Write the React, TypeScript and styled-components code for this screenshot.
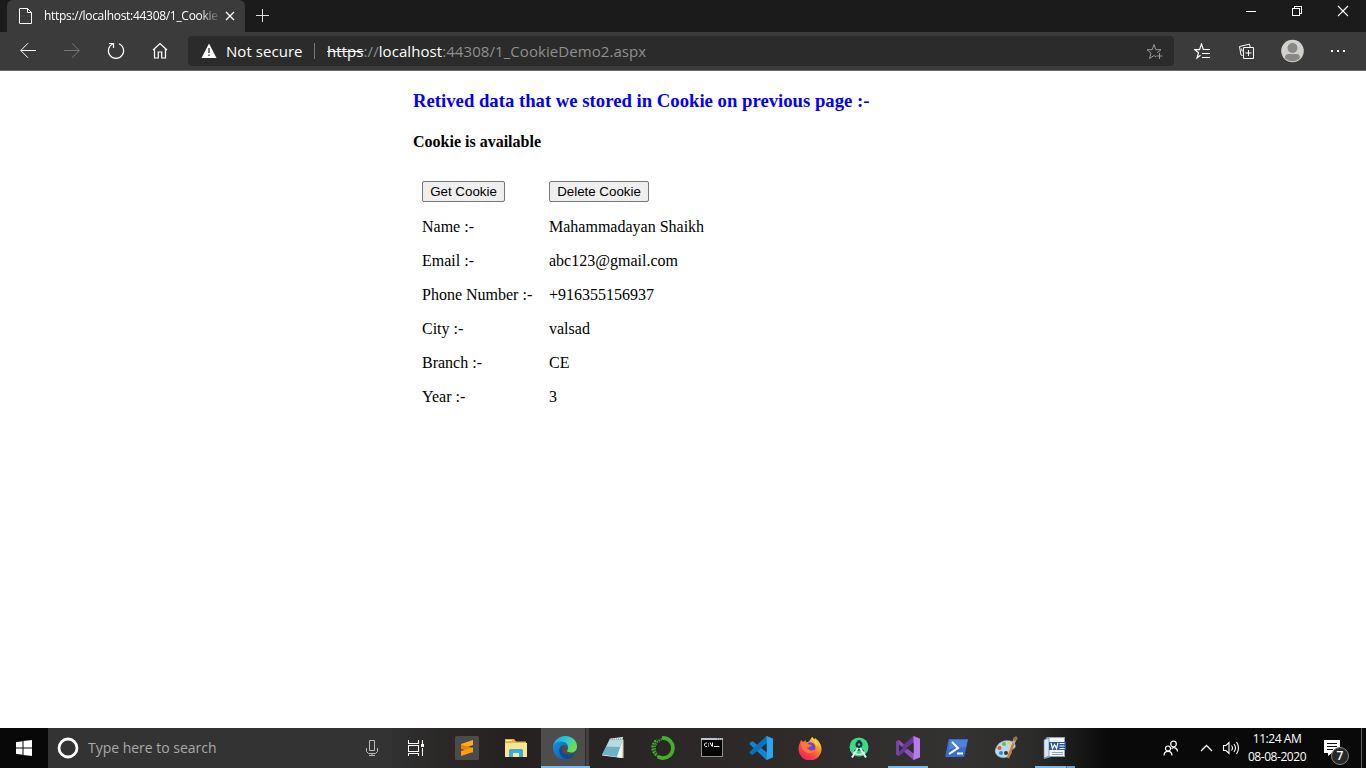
import React from "react";
import styled, { createGlobalStyle } from "styled-components";

const GlobalStyle = createGlobalStyle`
  *, *::before, *::after { box-sizing: border-box; }
  body { margin: 0; background: #fff; overflow: hidden; }
  svg { display: block; flex: none; }
`;

const ui = `"Open Sans", "Noto Sans", sans-serif`;

const Screen = styled.div`
  display: flex;
  flex-direction: column;
  width: 1366px;
  height: 768px;
`;

const TitleBar = styled.header`
  display: flex;
  height: 32px;
  background: #1b1b1b;
  padding-left: 7px;
`;

const Tab = styled.div`
  display: flex;
  align-items: center;
  width: 238px;
  background: #3b3b3b;
  border-radius: 6px 6px 0 0;
  padding-left: 11px;
`;

const TabTitle = styled.span`
  width: 175px;
  margin-left: 11px;
  white-space: nowrap;
  font: 12px/20px ${ui};
  letter-spacing: -0.3px;
  color: #fff;
  mask-image: linear-gradient(90deg, #000 156px, transparent 177px);
`;

const TabClose = styled.span`
  margin-left: 6px;
`;

const NewTab = styled.div`
  margin: 9px 0 0 11px;
`;

const WindowControls = styled.div`
  display: flex;
  margin-left: auto;
`;

const WindowButton = styled.div`
  display: flex;
  justify-content: center;
  width: 46px;
  padding-top: 5px;
`;

const Toolbar = styled.nav`
  display: flex;
  align-items: center;
  height: 39px;
  background: #3b3b3b;
  border-bottom: 1px solid #696969;
`;

const NavButton = styled.div`
  display: flex;
  align-items: center;
  justify-content: center;
  width: 44px;
  height: 30px;
`;

const NavGroup = styled.div`
  display: flex;
  width: 188px;
  padding-left: 6px;
`;

const AddressBar = styled.div`
  display: flex;
  align-items: center;
  width: 986px;
  height: 30px;
  padding: 0 11px 0 13px;
  border-radius: 4px;
  background: #2b2b2b;
  font: 15px/20px ${ui};
  white-space: nowrap;
`;

const SecurityLabel = styled.span`
  width: 79px;
  margin-left: 9px;
  color: #fff;
  letter-spacing: 0.05px;
`;

const Divider = styled.span`
  width: 1px;
  height: 16px;
  margin: 0 12px 0 9px;
  background: #777;
`;

const Url = styled.span`
  flex: 1;
  color: #8f8f8f;
  letter-spacing: 0.07px;
`;

const Scheme = styled.s`
  color: #fff;
`;

const Host = styled.span`
  color: #fff;
`;

const ToolGroup = styled.div`
  display: flex;
  padding-left: 6px;
`;

const ToolButton = styled(NavButton)`
  width: 45px;
`;

const Page = styled.main`
  flex: 1;
  padding: 19px 0 0 413px;
  font: 16px/18px "Liberation Serif", serif;
  color: #000;
`;

const Heading = styled.h3`
  margin: 0;
  font-size: 18.72px;
  line-height: 22px;
  color: #0000ff;
`;

const Status = styled.h4`
  margin: 21px 0 22px;
  font-size: 16px;
  line-height: 18px;
`;

const DataGrid = styled.div`
  display: grid;
  grid-template-columns: 127px 200px;
  grid-template-rows: 37px repeat(6, 34px);
  padding-left: 1px;
`;

const Cell = styled.div`
  padding: 8px;
  white-space: nowrap;
`;

const ActionButton = styled.button<{ $width: number }>`
  display: block;
  width: ${(p) => p.$width}px;
  height: 21px;
  padding: 0;
  border: 1px solid #767676;
  border-radius: 2px;
  background: #efefef;
  color: #000;
  font: 13.333px/15px "Liberation Sans", sans-serif;
`;

const Taskbar = styled.footer`
  display: flex;
  height: 40px;
  background: linear-gradient(90deg, #080808 0, #080808 48px, #303030 392px, #2b2928 440px, #252120 510px, #2b2626 640px, #2e2b29 800px, #343332 960px, #2b2b2a 1035px, #090909 1110px, #090909 100%);
  font-family: ${ui};
`;

const StartButton = styled.div`
  display: flex;
  align-items: center;
  justify-content: center;
  width: 48px;
`;

const SearchBox = styled.div`
  display: flex;
  align-items: center;
  width: 344px;
  padding: 0 14px 0 9px;
  background: #333;
`;

const SearchText = styled.span`
  flex: 1;
  margin-left: 9px;
  font-size: 14px;
  line-height: 20px;
  letter-spacing: -0.02px;
  color: #a9a9a9;
`;

const TaskViewButton = styled.div`
  display: flex;
  align-items: center;
  width: 49px;
  padding-left: 15px;
`;

const TaskSlot = styled.div<{ $state?: "active" | "open" | "multi" }>`
  display: flex;
  position: relative;
  align-items: center;
  width: 49px;
  padding-left: 12px;
  ${(p) =>
    p.$state === "active" &&
    `background: linear-gradient(90deg, #4f4c4c 44px, #302c2c 44px, #302c2c 45px, #443f3f 45px, #443f3f 48px, transparent 48px);
     box-shadow: inset 0 -2px #76b9ed;`}
  &::after {
    content: "";
    display: ${(p) => (p.$state === "open" || p.$state === "multi" ? "block" : "none")};
    position: absolute;
    bottom: 0;
    left: 4px;
    width: 40px;
    height: 2px;
    background: ${(p) => (p.$state === "multi" ? "linear-gradient(90deg, #76b9ed 31px, #4e7da1 31px, #4e7da1 32px, #68a3d1 32px)" : "#76b9ed")};
  }
`;

const AppRow = styled.div`
  display: flex;
  padding-left: 2px;
`;

const Tray = styled.div`
  display: flex;
  align-items: center;
  flex: 1;
  padding-left: 83px;
`;

const TrayIcon = styled.span<{ $gap: number }>`
  margin-left: ${(p) => p.$gap}px;
`;

const Clock = styled.div`
  width: 62px;
  margin-left: 6px;
  text-align: center;
  white-space: nowrap;
  font-size: 12px;
  line-height: 18px;
  letter-spacing: -0.45px;
  color: #fff;
`;

const Notifications = styled.div`
  position: relative;
  width: 26px;
  height: 26px;
  margin: 10px 0 0 16px;
`;

const Badge = styled.span`
  position: absolute;
  left: 7px;
  top: 6.500px;
  width: 18px;
  height: 18px;
  border: 1px solid #858585;
  border-radius: 50%;
  background: #282828;
  color: #fff;
  font-size: 12px;
  font-weight: 600;
  line-height: 16px;
  text-align: center;
`;

const DesktopEdge = styled.span`
  width: 1px;
  height: 40px;
  margin-left: auto;
  margin-right: 4px;
  background: #656565;
`;

type LineProps = { w: number; h: number; color?: string; width?: number; crisp?: boolean; children: React.ReactNode };

const Line = ({ w, h, color = "#fff", width = 1, crisp, children }: LineProps) => (
  <svg width={w} height={h} viewBox={`0 0 ${w} ${h}`} fill="none" stroke={color} strokeWidth={width} shapeRendering={crisp ? "crispEdges" : undefined}>
    {children}
  </svg>
);

const Art = ({ children }: { children: React.ReactNode }) => (
  <svg width="24" height="24" viewBox="0 0 24 24">{children}</svg>
);

const SublimeIcon = () => (
  <Art>
    <rect width="24" height="24" rx="1.5" fill="#4b4b4b" />
    <path d="M6 8 18 4v5L6 13z" fill="#ffae1a" />
    <path d="M6 8.500V13l12 3.500V12z" fill="#e78200" />
    <path d="M18 11.500v4.500L6 20v-5z" fill="#ff9d0a" />
  </Art>
);

const ExplorerIcon = () => (
  <Art>
    <path d="M1 3h9l2 2.500h10V21H1z" fill="#e8b63d" />
    <path d="M2 4h6v1H2z" fill="#fff2b5" />
    <path d="M1 7h22v14H1z" fill="#ffe590" />
    <path d="M5 21v-6.500q0-1.500 1.500-1.500h11q1.500 0 1.500 1.500V21h-4v-4H9v4z" fill="#35ade0" />
  </Art>
);

const EdgeIcon = () => (
  <Art>
    <defs>
      <linearGradient id="edgeTop" x1="0" y1="0" x2="1" y2=".5">
        <stop stopColor="#2098dc" /><stop offset=".5" stopColor="#28c7dc" /><stop offset="1" stopColor="#6dde51" />
      </linearGradient>
      <linearGradient id="edgeBase" x1="0" y1="0" x2="1" y2="1">
        <stop stopColor="#1592de" /><stop offset="1" stopColor="#1057a3" />
      </linearGradient>
    </defs>
    <path d="M0 12C0 5 5.500 0 12 0c8 0 12 5.500 12 10.500 0 4-3 6-6 6-2.500 0-4-.8-4-1.500 0-.6 1-1 1-3 0-2.300-2-4.500-5.500-4.500C4 7.500 0 10 0 12z" fill="url(#edgeTop)" />
    <path d="M0 12c0-4 4-6.500 8.500-6.500 4.500 0 7 3 6.500 6.500-.3-1.500-2-3-4-3-2.500 0-4.500 2.500-4.500 5.500 0 5 4 8.500 8.500 8.500-1 .6-2 1-3.500 1C5.500 24 0 18.500 0 12z" fill="url(#edgeBase)" />
    <path d="M9 9.500c-2 1.200-2.700 3-2.700 5 0 5 4 8.800 9 8.500 3-.8 5.300-2.800 6.700-5 .3-.6-.2-.8-.7-.5C15 20.500 8.500 18 8.500 12.500 8.500 11.300 8.700 10.500 9 9.500z" fill="#124b91" />
  </Art>
);

const NotepadIcon = () => (
  <Art>
    <path d="M20.500 3l1.500 1v18h-1.500z" fill="#9b7948" />
    <path d="M8 2.500 21 1l-.5 21L0 19.500z" fill="#d9eef1" />
    <path d="M8 3.500h12.500L15 21 0 18.500z" fill="#6db2c2" />
    <path d="M8 3.500h12.500L18 11 4.500 10.500z" fill="#b5dce4" />
    <path d="M0 19l15 2 5.500-15v16z" fill="#f2f5f5" />
    <path d="M8 3h13" stroke="#777" strokeDasharray="1 1" />
  </Art>
);

const AnacondaIcon = () => (
  <Art>
    <path d="M11 2a10 10 0 1 1-4 18.700" fill="none" stroke="#43b02a" strokeWidth="3.700" />
    <path d="M8 21C0 17-.5 8 6 3.800" fill="none" stroke="#43b02a" strokeWidth="2.400" strokeDasharray="2 1" />
    <path d="M6 18C2 14 3 6 11 3" fill="none" stroke="#369d25" strokeWidth="2.200" strokeDasharray="1.600 .9" />
  </Art>
);

const CommandIcon = () => (
  <Art>
    <rect x="1.500" y="2.500" width="21" height="18" fill="#050505" stroke="#8f8f8f" />
    <path d="M1 2h22v2H1z" fill="#bcc5d0" />
    <path d="M17 3h1m1 0h1m1 0h1" stroke="#58616b" />
    <path d="M7 7H5.500L4.500 8v1.500l1 1H7M8.500 7.500v1m0 1v1M10 6.500l2 4m.5-4v4M14 10.500h5.500" fill="none" stroke="#eee" />
  </Art>
);

const VsCodeIcon = () => (
  <Art>
    <path d="M17.500 0 24 2.700v18.600L17.500 24 1 8.500q-1-1 0-1.700L2.500 5.500q.7-.5 1.500 0L18 16.500V7z" fill="#1684ce" />
    <path d="M17.500 0 1 15.500q-1 1 0 1.700l1.500 1.300q.7.500 1.500 0L18 7z" fill="#0873bd" />
    <path d="M17.500 0 24 2.700v18.600L17.500 24l.5-3z" fill="#2ba5ed" />
  </Art>
);

const FirefoxIcon = () => (
  <Art>
    <defs>
      <linearGradient id="foxFire" x1=".9" y1="0" x2=".2" y2="1">
        <stop stopColor="#fff23a" /><stop offset=".35" stopColor="#ff9a22" /><stop offset=".7" stopColor="#ff3e45" /><stop offset="1" stopColor="#e52172" />
      </linearGradient>
    </defs>
    <path d="M2 7 3 4l2 2 3-2-.5 2.500L11 5.500 14 1l2 3 1-2c4 3 6.500 6.500 6.500 11A11.500 11.500 0 0 1 .5 13C.5 10 1 8.500 2 7z" fill="url(#foxFire)" />
    <circle cx="12.200" cy="11.500" r="5.300" fill="#7145cf" />
    <path d="M3 8c3-2 6-1.500 8 .5l3 .5-3 2.500-2-.2c.5 3 5 4.500 8.500 2-2 6-13 6-14.500-5.300z" fill="#ff7836" />
    <path d="M14 1c-.8 4 4.500 5 4.500 10 2-3 .5-5.500-1.500-7z" fill="#ffd43a" />
  </Art>
);

const AndroidIcon = () => (
  <Art>
    <circle cx="12" cy="11" r="9.500" fill="#3ddc84" />
    <circle cx="12" cy="8.500" r="3.500" fill="#073042" />
    <path d="M10.500 4h3v4h-3z" fill="#073042" />
    <circle cx="12" cy="8.500" r="1.200" fill="#3ddc84" />
    <path d="M7.500 15q4.500-3 9 0" fill="none" stroke="#073042" strokeWidth="1.800" />
    <path d="M11 12 5 21.500M13 12l6 9.500" stroke="#e5f4ee" strokeWidth="2" />
    <path d="M6.500 16.500q5.500 4 11 0" fill="none" stroke="#fff" strokeWidth="1.500" />
  </Art>
);

const VisualStudioIcon = () => (
  <Art>
    <path d="M17.500 0 24 2.800v18.400L17.500 24 0 8.500v-3L3 4l15 13V7z" fill="#8a50bd" />
    <path d="M17.500 0 24 2.800 3 20l-3-1.500v-3z" fill="#6a3698" />
    <path d="M0 5.500 3 4v16l-3-1.500z" fill="#7642a6" />
    <path d="M17.500 0 24 2.800v18.400L17.500 24z" fill="#b57be8" />
    <path d="M10.500 12l7-5.500v11z" fill="#2f2d2c" />
    <path d="M3 8.500 7 12l-4 3.500z" fill="#2f2d2c" />
  </Art>
);

const PowerShellIcon = () => (
  <Art>
    <path d="M4.500 3h18q.7 0 .5.8L19.500 20q-.2 1-1 1H1q-1 0-.7-1L3.500 4q.2-1 1-1z" fill="#376dcc" />
    <path d="M5 4h17.500L21 11 3.500 13z" fill="#4d83dc" />
    <path d="M7 6l6 6-9 6M12 17.500h6" fill="none" stroke="#fff" strokeWidth="2" />
  </Art>
);

const PaintIcon = () => (
  <Art>
    <path d="M2 12C4 6 11 3 17 5c6 3 5 7 2 8-3 1-1 2-2 5-3 5-12 5-15 0q-2-3 0-6z" fill="#b9d9ec" stroke="#7797aa" strokeWidth=".6" />
    <circle cx="10" cy="8" r="2" fill="#70bb48" />
    <circle cx="5.500" cy="12" r="2" fill="#d95938" />
    <circle cx="7" cy="17" r="2" fill="#348bc4" />
    <circle cx="15" cy="7" r="1.800" fill="#f0d24f" />
    <circle cx="12" cy="17" r="2" fill="#36393a" />
    <path d="M14 22 19.500 7" stroke="#d47c21" strokeWidth="2.400" />
    <path d="M19 7.500 21 3.500" stroke="#b5b1aa" strokeWidth="3" />
    <path d="M20 5q-2-3 .5-4l2-1q0 2 1.500 2-1 3-4 3z" fill="#9c7444" />
  </Art>
);

const WordIcon = () => (
  <Art>
    <path d="M4 1h18v20H8l-7 2V4z" fill="#8ba5c6" />
    <path d="M6 2h15v18H6z" fill="#f2f5fa" />
    <path d="M1 4l5-2v18l-5 2z" fill="#dce5f2" stroke="#6584ae" strokeWidth=".7" />
    <path d="M6 6h17v8H6z" fill="#2b579a" />
    <path d="M8 7l1.500 5.500 2-4 2 4L15 7M16.500 7.500h5m-5 2.500h5m-5 2.500h5" fill="none" stroke="#fff" strokeWidth="1.200" />
    <path d="M9 16.500h11m-11 2h11" stroke="#8da7ca" />
  </Art>
);

const apps: { Icon: () => React.ReactElement; state?: "active" | "open" | "multi" }[] = [
  { Icon: SublimeIcon },
  { Icon: ExplorerIcon },
  { Icon: EdgeIcon, state: "active" },
  { Icon: NotepadIcon },
  { Icon: AnacondaIcon },
  { Icon: CommandIcon },
  { Icon: VsCodeIcon },
  { Icon: FirefoxIcon },
  { Icon: AndroidIcon },
  { Icon: VisualStudioIcon, state: "open" },
  { Icon: PowerShellIcon },
  { Icon: PaintIcon },
  { Icon: WordIcon, state: "multi" },
];

const fields = [
  ["Name :-", "Mahammadayan Shaikh"],
  ["Email :-", "abc123@gmail.com"],
  ["Phone Number :-", "+916355156937"],
  ["City :-", "valsad"],
  ["Branch :-", "CE"],
  ["Year :-", "3"],
];

export default function App() {
  return (
    <Screen>
      <GlobalStyle />
      <TitleBar>
        <Tab>
          <Line w={15} h={16}><path d="M1.500.5h8l4 4v11h-12zM9.500.5v4h4" /></Line>
          <TabTitle>https://localhost:44308/1_Cookie</TabTitle>
          <TabClose><Line w={10} h={10} width={1.300}><path d="M1 1l8 8M9 1L1 9" /></Line></TabClose>
        </Tab>
        <NewTab><Line w={13} h={13} color="#ddd" crisp><path d="M6.500 0v13M0 6.500h13" /></Line></NewTab>
        <WindowControls>
          <WindowButton><Line w={12} h={12} crisp><path d="M1 6.500h10" /></Line></WindowButton>
          <WindowButton><Line w={12} h={12} crisp><path d="M1.500 3.500h7v7h-7zM3.500 3V1.500h7v7H9" /></Line></WindowButton>
          <WindowButton><Line w={12} h={12} width={1.200}><path d="M1 1l10 10M11 1L1 11" /></Line></WindowButton>
        </WindowControls>
      </TitleBar>

      <Toolbar>
        <NavGroup>
          <NavButton><Line w={16} h={16}><path d="M16 7.500H.8M8 .2.8 7.500 8 14.800" /></Line></NavButton>
          <NavButton><Line w={16} h={16} color="#777"><path d="M0 7.500h15.200M8 .2l7.200 7.300L8 14.800" /></Line></NavButton>
          <NavButton><Line w={18} h={18} width={1.200}><path d="M2 1.500h4.500V6M6 1.800a7.600 7.600 0 1 0 6 0" /></Line></NavButton>
          <NavButton><Line w={16} h={18} width={1.200}><path d="M1 8 8 1.500 15 8M2.500 7v9h3.800v-6h3.400v6h3.800V7" /></Line></NavButton>
        </NavGroup>
        <AddressBar>
          <svg width="16" height="16" viewBox="0 0 16 16"><path d="M8 .5 15.500 15H.5z" fill="#fff" /><path d="M8 5v5m0 1.500V13" stroke="#2b2b2b" strokeWidth="1.300" /></svg>
          <SecurityLabel>Not secure</SecurityLabel>
          <Divider />
          <Url><Scheme>https</Scheme>://<Host>localhost</Host>:44308/1_CookieDemo2.aspx</Url>
          <Line w={17} h={17} color="#999"><path d="M10 14 8 12.500l-4.500 3 1.500-5.300L1 6.700h5.200L8 1.500l1.800 5.200H15l-3.800 3M13.500 10v6M10.500 13h6" /></Line>
        </AddressBar>
        <ToolGroup>
          <ToolButton><Line w={17} h={17} width={1.200}><path d="M6.500 12.300 3 15l1.500-5.200L.8 6.700h4.700L7.500 1l1.800 5.500H16M8 10.500h8M8 14.500h8" /></Line></ToolButton>
          <ToolButton><Line w={17} h={17}><path d="M3.500 12.500 2 12 0.500 3.500l10-2.300.7 3M4.500 4.500h10v11h-10zM9.500 7v6M6.500 10h6M2.500 5.500l.7 3" /></Line></ToolButton>
          <ToolButton>
            <svg width="24" height="24" viewBox="0 0 24 24"><circle cx="11.500" cy="12" r="11.300" fill="#d2d0cd" /><circle cx="11.500" cy="9" r="5" fill="#8a8886" /><path d="M4 19c0-3.500 2-4 4-4h7c2 0 4 .5 4 4a10.300 10.300 0 0 1-15 0z" fill="#8a8886" /></svg>
          </ToolButton>
          <ToolButton><svg width="16" height="4" viewBox="0 0 16 4" fill="#fff"><path d="M1 1h2v2H1zm6 0h2v2H7zm6 0h2v2h-2z" /></svg></ToolButton>
        </ToolGroup>
      </Toolbar>

      <Page>
        <Heading>Retived data that we stored in Cookie on previous page :-</Heading>
        <Status>Cookie is available</Status>
        <DataGrid>
          <Cell><ActionButton $width={83}>Get Cookie</ActionButton></Cell>
          <Cell><ActionButton $width={100}>Delete Cookie</ActionButton></Cell>
          {fields.map(([label, value]) => (
            <React.Fragment key={label}>
              <Cell>{label}</Cell>
              <Cell>{value}</Cell>
            </React.Fragment>
          ))}
        </DataGrid>
      </Page>

      <Taskbar>
        <StartButton>
          <svg width="16" height="16" viewBox="0 0 16 16" fill="#fff"><path d="M0 2.200 6.500 1.300v6.200H0zM7.500 1.100 16 0v7.500H7.500zM0 8.500h6.500v6.200L0 13.800zM7.500 8.500H16V16l-8.500-1.100z" /></svg>
        </StartButton>
        <SearchBox>
          <Line w={22} h={22} width={2.800}><circle cx="11" cy="11" r="9" /></Line>
          <SearchText>Type here to search</SearchText>
          <Line w={12} h={16} color="#bbb"><path d="M3.500.5h5v10h-5zM.5 8v3.500l2 2h7l2-2V8M6 13.500v2M3 15.500h6" /></Line>
        </SearchBox>
        <TaskViewButton>
          <Line w={18} h={16} width={1.200} crisp><path d="M1.500 0v3.500h10V0M1.500 5.500h10v6h-10zM1.500 16v-2.500h10V16M15.500 0v4M15.500 8v8" /><path d="M14 4h3v3h-3z" fill="#fff" stroke="none" /></Line>
        </TaskViewButton>
        <AppRow>
          {apps.map(({ Icon, state }, i) => (
            <TaskSlot key={i} $state={state}><Icon /></TaskSlot>
          ))}
        </AppRow>
        <Tray>
          <Line w={17} h={17} width={1.200}><circle cx="10.500" cy="4" r="2.800" /><circle cx="5" cy="8.500" r="2.500" /><path d="M1 15.500c0-5.500 8-5.500 8 0M8.500 8.500c3-2 6 0 6 3" /></Line>
          <TrayIcon $gap={20}><Line w={13} h={8} width={1.300}><path d="M1 7l5.500-5.500L12 7" /></Line></TrayIcon>
          <TrayIcon $gap={9}><Line w={18} h={16} width={1.100}><path d="M1.500 5.500h2.500l3-3v11l-3-3H1.500zM9.500 5.500q2 2.500 0 5M12 4q3 4 0 8M14.500 2q4 6 0 12" /></Line></TrayIcon>
          <Clock>11:24 AM<br />08-08-2020</Clock>
          <Notifications>
            <svg width="17" height="17" viewBox="0 0 17 17"><path d="M0 0h16v13H8l-4 3v-3H0z" fill="#fff" /><path d="M3 3.500h10M3 6.500h10M3 9.500h6" stroke="#111" /></svg>
            <Badge>7</Badge>
          </Notifications>
          <DesktopEdge />
        </Tray>
      </Taskbar>
    </Screen>
  );
}
